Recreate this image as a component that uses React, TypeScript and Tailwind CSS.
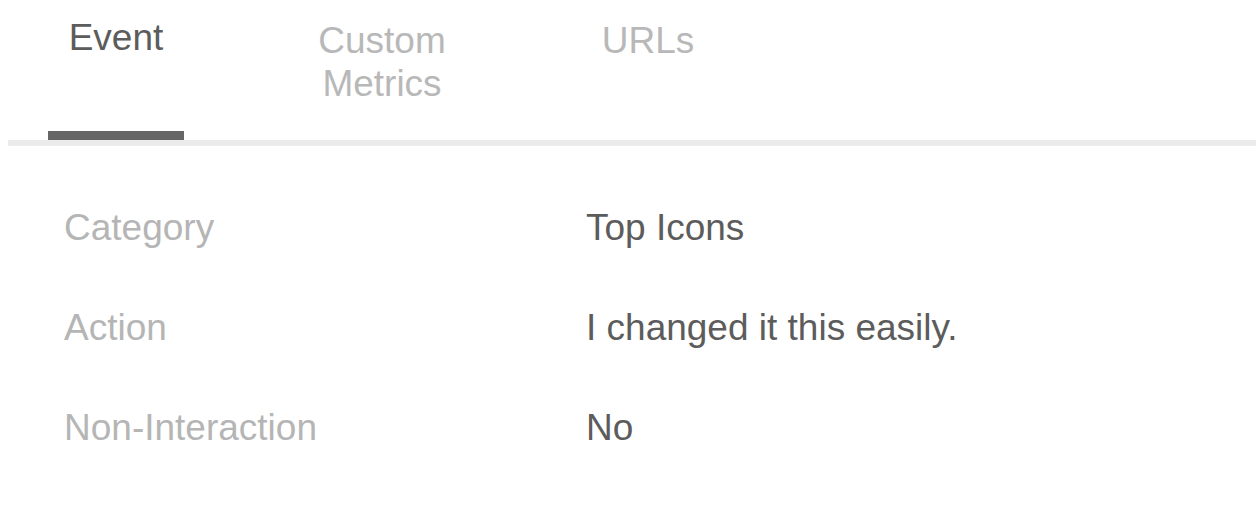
import React from "react";

const rows = [
  { label: "Category", value: "Top Icons" },
  { label: "Action", value: "I changed it this easily." },
  { label: "Non-Interaction", value: "No" },
];

const App = () => {
  return (
    <div className="w-full h-[510px] bg-white font-['Liberation_Sans',Arial,sans-serif] text-[37px] leading-[43px] overflow-hidden">
      {/* tabs */}
      <div className="flex h-[140px] pl-[48px] gap-[108px]">
        <div className="w-[136px] flex flex-col justify-between items-center">
          <span className="pt-[16px] text-[#5c5c5c]">Event</span>
          <span className="block w-full h-[9px] bg-[#666666]" />
        </div>
        <div className="w-[180px] pt-[19px] text-center text-[#b8b8b8]">
          Custom
          <br />
          Metrics
        </div>
        <div className="w-[136px] pt-[19px] text-center text-[#b8b8b8]">URLs</div>
      </div>
      <div className="ml-[8px] h-[6px] bg-[#ebebeb]" />

      {/* details */}
      <div className="flex flex-col gap-[57px] pt-[60px] pl-[64px]">
        {rows.map((row) => (
          <div key={row.label} className="grid grid-cols-[522px_1fr]">
            <span className="text-[#b5b5b5]">{row.label}</span>
            <span className="text-[#5c5c5c]">{row.value}</span>
          </div>
        ))}
      </div>
    </div>
  );
};

export default App;
